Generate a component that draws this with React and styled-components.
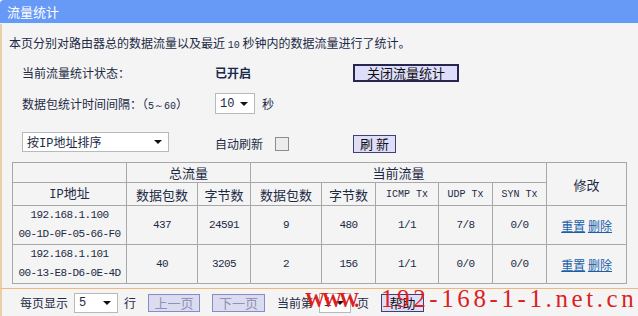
import React from 'react';
import styled, { createGlobalStyle } from 'styled-components';

const GlobalStyle = createGlobalStyle`
    body {
        margin: 0;
        background: #f4f4f4;
        font-family: "Noto Sans CJK SC", "DejaVu Sans", sans-serif;
        font-size: 12px;
        color: #1c2a44;
    }
`;

const rows = [
    { ip: '192.168.1.100', mac: '00-1D-0F-05-66-F0', totalPkts: '437', totalBytes: '24591', pkts: '9', bytes: '480', icmp: '1/1', udp: '7/8', syn: '0/0' },
    { ip: '192.168.1.101', mac: '00-13-E8-D6-0E-4D', totalPkts: '40', totalBytes: '3205', pkts: '2', bytes: '156', icmp: '1/1', udp: '0/0', syn: '0/0' },
];

const App = () => {
    return (
        <Page>
            <GlobalStyle />
            <TitleBar>流量统计</TitleBar>
            <Body>
                <Intro>
                    本页分别对路由器总的数据流量以及最近 <Mono>10</Mono> 秒钟内的数据流量进行了统计。
                </Intro>
                <FormGrid>
                    <Label>当前流量统计状态：</Label>
                    <Status>已开启</Status>
                    <Button $strong $width={106}>关闭流量统计</Button>

                    <Label>
                        数据包统计时间间隔：（<Mono>5～60</Mono>）
                    </Label>
                    <Inline>
                        <Select $width={40} $height={21}>
                            <Mono $size={12}>10</Mono>
                            <Arrow />
                        </Select>
                        <span>秒</span>
                    </Inline>
                    <span />

                    <Select $width={147} $height={20}>
                        <span>按<Mono $size={12}>IP</Mono>地址排序</span>
                        <Arrow />
                    </Select>
                    <Inline $gap={12}>
                        <span>自动刷新</span>
                        <Checkbox />
                    </Inline>
                    <Button $width={43}>刷&nbsp;新</Button>
                </FormGrid>

                <Table>
                    <colgroup>
                        <col style={{ width: 114 }} />
                        <col style={{ width: 71 }} />
                        <col style={{ width: 53 }} />
                        <col style={{ width: 71 }} />
                        <col style={{ width: 54 }} />
                        <col style={{ width: 63 }} />
                        <col style={{ width: 54 }} />
                        <col style={{ width: 54 }} />
                        <col style={{ width: 80 }} />
                    </colgroup>
                    <thead>
                        <tr>
                            <Th />
                            <Th colSpan={2}>总流量</Th>
                            <Th colSpan={5}>当前流量</Th>
                            <Th rowSpan={2}>修改</Th>
                        </tr>
                        <tr>
                            <Th><Mono $size={12}>IP</Mono>地址</Th>
                            <Th>数据包数</Th>
                            <Th>字节数</Th>
                            <Th>数据包数</Th>
                            <Th>字节数</Th>
                            <Th $mono>ICMP Tx</Th>
                            <Th $mono>UDP Tx</Th>
                            <Th $mono>SYN Tx</Th>
                        </tr>
                    </thead>
                    <tbody>
                        {rows.map((row) => (
                            <tr key={row.ip}>
                                <Td $mono>
                                    {row.ip}
                                    <br />
                                    {row.mac}
                                </Td>
                                <Td $mono>{row.totalPkts}</Td>
                                <Td $mono>{row.totalBytes}</Td>
                                <Td $mono>{row.pkts}</Td>
                                <Td $mono>{row.bytes}</Td>
                                <Td $mono>{row.icmp}</Td>
                                <Td $mono>{row.udp}</Td>
                                <Td $mono>{row.syn}</Td>
                                <Td>
                                    <Link href="#">重置</Link> <Link href="#">删除</Link>
                                </Td>
                            </tr>
                        ))}
                    </tbody>
                </Table>
            </Body>

            <Footer>
                <span>每页显示</span>
                <Select $width={44} $height={20}>
                    <Mono $size={12}>5</Mono>
                    <Arrow />
                </Select>
                <span>行</span>
                <Button $disabled $width={52}>上一页</Button>
                <Button $disabled $width={53}>下一页</Button>
                <span>当前第</span>
                <Select $width={32} $height={20}>
                    <Mono $size={12}>1</Mono>
                    <Arrow />
                </Select>
                <span>页</span>
                <Button $width={43}>帮助</Button>
            </Footer>

            <Watermark>
                <Www>WWW.</Www>
                <Domain>192-168-1-1.net.cn</Domain>
            </Watermark>
        </Page>
    );
};

export default App;

const Page = styled.div`
    position: relative;
    width: 638px;
    height: 316px;
    overflow: hidden;
    background: #f4f4f4;
    display: flex;
    flex-direction: column;
`;

const TitleBar = styled.div`
    height: 24px;
    line-height: 23px;
    padding-left: 7px;
    background: #6799f6;
    color: #fff;
    font-size: 13px;
    border-top-left-radius: 4px;
    border-bottom: 1px solid #e6f6ff;
    box-sizing: border-box;
`;

const Body = styled.div`
    flex: 1;
    border-left: 2px solid #e9cfa6;
    padding: 10px 0 0 7px;
`;

const Intro = styled.div`
    height: 18px;
    line-height: 18px;
`;

const Mono = styled.span`
    font-family: "Liberation Mono", "DejaVu Sans Mono", monospace;
    font-size: ${(p) => p.$size || 10}px;
`;

const FormGrid = styled.div`
    display: grid;
    grid-template-columns: 193px 138px auto;
    grid-auto-rows: 31px;
    align-items: center;
    margin: 5px 0 0 13px;

    & > :nth-child(7) {
        margin-top: 14px;
    }
    & > :nth-child(8), & > :nth-child(9) {
        margin-top: 18px;
    }
`;

const Label = styled.span`
    white-space: nowrap;
`;

const Status = styled.span`
    font-weight: bold;
    color: #1a2a4e;
    font-size: 12px;
`;

const Inline = styled.div`
    display: flex;
    align-items: center;
    gap: ${(p) => p.$gap || 7}px;
`;

const Button = styled.div`
    width: ${(p) => p.$width}px;
    height: 18px;
    box-sizing: border-box;
    display: flex;
    align-items: center;
    justify-content: center;
    background: ${(p) => (p.$disabled ? '#dcdcf0' : '#dedefa')};
    border: ${(p) => (p.$strong ? '2px solid #262650' : p.$disabled ? '1px solid #8a8ac4' : '1px solid #40406a')};
    color: ${(p) => (p.$disabled ? '#8e92b4' : '#111')};
    font-size: 13px;
    white-space: nowrap;
`;

const Select = styled.div`
    width: ${(p) => p.$width}px;
    height: ${(p) => p.$height}px;
    box-sizing: border-box;
    display: flex;
    align-items: center;
    justify-content: space-between;
    padding: 0 6px 0 4px;
    background: #fff;
    border: 1px solid #b9b9b9;
`;

const Arrow = styled.span`
    width: 0;
    height: 0;
    border-left: 4px solid transparent;
    border-right: 4px solid transparent;
    border-top: 4px solid #111;
`;

const Checkbox = styled.span`
    width: 12px;
    height: 12px;
    background: #ececec;
    border: 1px solid #8c8c8c;
`;

const Table = styled.table`
    margin: 12px 0 0 3px;
    width: 615px;
    border-collapse: collapse;
    table-layout: fixed;
    border: 1px solid #a8a8a8;
`;

const Th = styled.th`
    height: 19px;
    padding: 0;
    font-weight: normal;
    border: 1px solid #a8a8a8;
    text-align: center;
    font-size: ${(p) => (p.$mono ? 10 : 13)}px;
    font-family: ${(p) => (p.$mono ? '"Liberation Mono", monospace' : 'inherit')};
    line-height: 19px;
`;

const Td = styled.td`
    height: 37px;
    padding: 0;
    border: 1px solid #a8a8a8;
    text-align: center;
    line-height: 19px;
    font-size: ${(p) => (p.$mono ? 11 : 12)}px;
    letter-spacing: ${(p) => (p.$mono ? '-0.6px' : 'normal')};
    font-family: ${(p) => (p.$mono ? '"Liberation Mono", monospace' : 'inherit')};
`;

const Link = styled.a`
    color: #1b5ea9;
    text-decoration: underline;
`;

const Footer = styled.div`
    height: 27px;
    flex: none;
    border-top: 1px solid #efb87c;
    border-left: 2px solid #e9cfa6;
    display: flex;
    align-items: center;
    padding-left: 18px;
    gap: 6px;

    & > :nth-child(4),
    & > :nth-child(5),
    & > :nth-child(6),
    & > :nth-child(9) {
        margin-left: 6px;
    }
`;

const Watermark = styled.div`
    position: absolute;
    left: 305px;
    bottom: 3px;
    display: flex;
    align-items: baseline;
    color: #dd1f1f;
    font-family: "Liberation Serif", serif;
    white-space: nowrap;
`;

const Www = styled.span`
    font-weight: bold;
    font-size: 20px;
    letter-spacing: -3px;
    width: 76px;
`;

const Domain = styled.span`
    font-size: 25px;
    letter-spacing: 3.6px;
`;
